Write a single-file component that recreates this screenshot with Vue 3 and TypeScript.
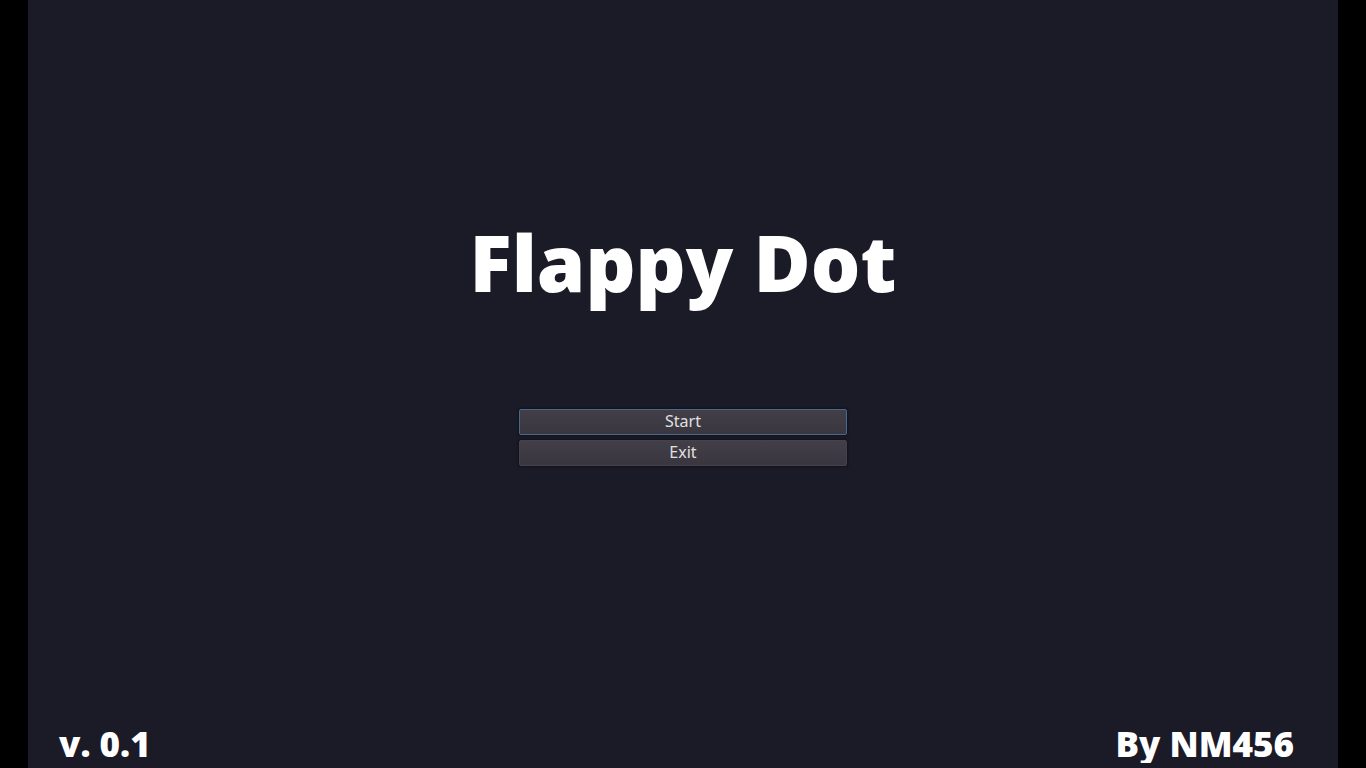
<script setup lang="ts">
const title = 'Flappy Dot'
const actions: string[] = ['Start', 'Exit']
</script>

<template>
  <div class="window">
    <main class="screen">
      <h1 class="title">{{ title }}</h1>
      <nav class="menu">
        <button
          v-for="(action, i) in actions"
          :key="action"
          type="button"
          class="item"
          :class="{ focused: i === 0 }"
        >
          {{ action }}
        </button>
      </nav>
      <footer class="footer">
        <span>v. 0.1</span>
        <span>By NM456</span>
      </footer>
    </main>
  </div>
</template>

<style>
body {
  margin: 0;
  background: #000;
}
</style>

<style scoped>
.window {
  min-height: 100vh;
  display: flex;
  padding: 0 28px;
  background: #000;
  box-sizing: border-box;
}
.screen {
  flex: 1;
  display: flex;
  flex-direction: column;
  align-items: center;
  background: #1b1a27;
  color: #fff;
  font-family: "Open Sans", "Noto Sans", sans-serif;
}
.title {
  margin: 208px 0 0;
  font-size: 78px;
  line-height: 108px;
  font-weight: 800;
}
.menu {
  width: 25%;
  margin-top: 93px;
  display: flex;
  flex-direction: column;
  gap: 5px;
}
.item {
  height: 26px;
  padding: 0 0 3px;
  border: 1px solid #45424c;
  border-radius: 2px;
  background: linear-gradient(#423f49, #39363f);
  box-shadow: 0 0 2px 1px #14131c;
  color: #e0e0e0;
  font: 16px/20px "Noto Sans", sans-serif;
}
.item.focused {
  border-color: #446a8e;
}
/* The labels' boxes end above the screen's edge and cut descenders. */
.footer {
  align-self: stretch;
  height: 43px;
  margin-top: auto;
  margin-bottom: 5px;
  padding: 0 44px 0 31px;
  overflow: hidden;
  display: flex;
  justify-content: space-between;
  font-size: 35px;
  line-height: 48px;
  font-weight: 800;
}
</style>
